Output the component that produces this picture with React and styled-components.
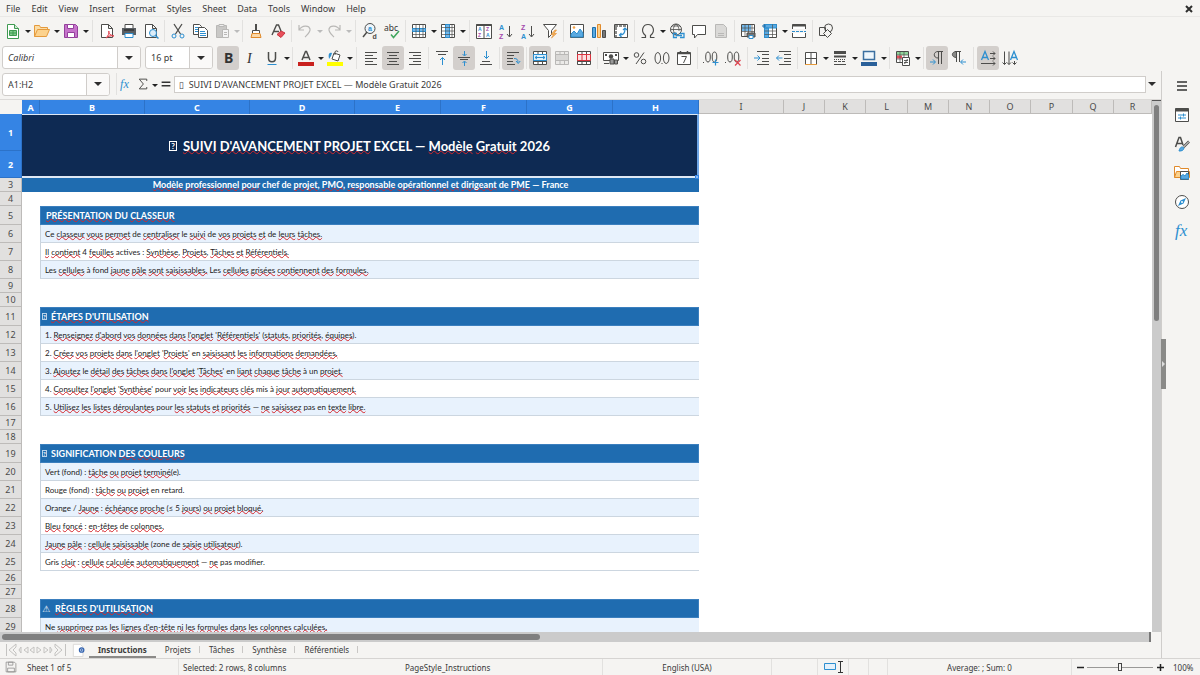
import { Fragment, useState } from "react";
import styled, { createGlobalStyle, css } from "styled-components";

/* ---------- data ---------- */
const MENUS = ["File", "Edit", "View", "Insert", "Format", "Styles", "Sheet", "Data", "Tools", "Window", "Help"];

const COLUMNS = [
  ["A", 18], ["B", 105], ["C", 105], ["D", 105], ["E", 86], ["F", 86], ["G", 86], ["H", 86], ["I", 85],
  ["J", 41], ["K", 41], ["L", 42], ["M", 41], ["N", 41], ["O", 41], ["P", 42], ["Q", 41], ["R", null],
];
const SELECTED_COLS = 8;

// words in [brackets] get the spell checker's wave
const ROWS = [
  { h: 37, kind: "title" },
  { h: 27, kind: "merged" },
  { h: 14, kind: "subtitle", text: "[Modèle] [professionnel] [pour] chef de [projet], [PMO], [responsable] [opérationnel] [et] [dirigeant] de [PME] — France" },
  { h: 14 },
  { h: 19, kind: "section", text: "[PRÉSENTATION] DU [CLASSEUR]" },
  { h: 18, kind: "line", tint: true, text: "Ce [classeur] [vous] [permet] de [centraliser] le [suivi] de [vos] [projets] [et] de [leurs] [tâches.]" },
  { h: 18, kind: "line", text: "[Il] [contient] 4 [feuilles] actives : [Synthèse], [Projets], [Tâches] [et] [Référentiels.]" },
  { h: 18, kind: "line", tint: true, text: "Les [cellules] à fond [jaune] [pâle] [sont] [saisissables.] Les [cellules] [grisées] [contiennent] [des] [formules.]" },
  { h: 14 },
  { h: 14 },
  { h: 19, kind: "section", mark: "box", text: "[ÉTAPES] [D'UTILISATION]" },
  { h: 18, kind: "line", tint: true, text: "1. [Renseignez] [d'abord] [vos] [données] [dans] [l'onglet] '[Référentiels]' ([statuts], [priorités], [équipes])." },
  { h: 18, kind: "line", text: "2. [Créez] [vos] [projets] [dans] [l'onglet] '[Projets]' en [saisissant] [les] [informations] [demandées.]" },
  { h: 18, kind: "line", tint: true, text: "3. [Ajoutez] le [détail] [des] [tâches] [dans] [l'onglet] '[Tâches]' en [liant] [chaque] [tâche] à un [projet.]" },
  { h: 18, kind: "line", text: "4. [Consultez] [l'onglet] '[Synthèse]' pour [voir] [les] [indicateurs] [clés] mis à [jour] [automatiquement.]" },
  { h: 18, kind: "line", tint: true, text: "5. [Utilisez] [les] [listes] [déroulantes] pour [les] [statuts] [et] [priorités] — [ne] [saisissez] pas en [texte] [libre.]" },
  { h: 14 },
  { h: 14 },
  { h: 19, kind: "section", mark: "box", text: "SIGNIFICATION [DES] [COULEURS]" },
  { h: 18, kind: "line", tint: true, text: "Vert (fond) : [tâche] [ou] [projet] [terminé](e)." },
  { h: 18, kind: "line", text: "Rouge (fond) : [tâche] [ou] [projet] en retard." },
  { h: 18, kind: "line", tint: true, text: "Orange / [Jaune] : [échéance] [proche] (≤ 5 [jours]) [ou] [projet] [bloqué.]" },
  { h: 18, kind: "line", text: "[Bleu] [foncé] : [en-têtes] de [colonnes.]" },
  { h: 18, kind: "line", tint: true, text: "[Jaune] [pâle] : [cellule] [saisissable] (zone de [saisie] [utilisateur])." },
  { h: 18, kind: "line", text: "Gris [clair] : [cellule] [calculée] [automatiquement] — [ne] pas modifier." },
  { h: 14 },
  { h: 14 },
  { h: 19, kind: "section", mark: "warn", text: "[RÈGLES] [D'UTILISATION]" },
  { h: 18, kind: "line", tint: true, text: "Ne [supprimez] pas [les] [lignes] [d'en-tête] [ni] [les] [formules] [dans] [les] [colonnes] [calculées.]" },
];

const SHEETS = ["Instructions", "Projets", "Tâches", "Synthèse", "Référentiels"];

// "|" thin separator, "||" wide separator, "v" dropdown arrow
const STANDARD = [
  "new", "v", "open", "v", "save", "v", "||", "pdf", "print", "preview", "|", "cut", "copy", "paste", "v-",
  "|", "brush", "clear", "|", "undo", "v-", "redo", "v-", "||", "find", "spell", "|", "row", "v", "column", "v",
  "||", "sort", "az", "za", "filter", "|", "image", "chart", "pivot", "|", "omega", "v", "link", "comment",
  "header", "|", "printarea", "freeze", "v", "split", "|", "shapes",
];
const FORMATTING = [
  "bold*", "italic", "underline", "v", "|", "fontcolor", "v", "fill", "v", "||", "left", "center*", "right",
  "|", "top", "middle*", "bottom", "|", "wrap*", "|", "merge*", "unmerge", "split2", "|", "currency", "v",
  "percent", "number", "date", "|", "adddec", "deldec", "||", "indent", "outdent", "|", "borders", "v",
  "linestyle", "v", "linecolor", "v", "|", "conditional", "v", "|", "ltr*", "rtl", "||", "horizontal*", "vertical",
];
const SIDEBAR = ["menu", "properties", "styles", "gallery", "navigator", "functions"];

/* ---------- icons (16 x 16) ---------- */
const K = "#4d4d4b";
const B = "#2d8fd0";
const G = "#b9b8b6";
const P = "#a348ad";

const ICONS = {
  new: (
    <>
      <path d="M2.500 1.500h7l4 4v10h-11z" fill="#fff" stroke="#3f9a51" />
      <path d="M9.500 1.500v4h4" fill="#cfead3" stroke="#3f9a51" />
      <path d="M4.500 7.500h7v5h-7zM4.500 10h7M8 7.500v5" fill="#7fce8b" stroke="#3f9a51" />
    </>
  ),
  open: (
    <>
      <path d="M.5 13.500V2.500h5l1 2h7v3" fill="#fbdca4" stroke="#e59a3c" />
      <path d="M.5 13.500l3-7h12l-3 7z" fill="#fcd28d" stroke="#e59a3c" />
    </>
  ),
  save: (
    <>
      <path d="M1.500 1.500h11l2 2v11h-13z" fill="#c673cb" stroke="#94409b" />
      <path d="M4.500 1.500h6v4h-6z" fill="#fff" stroke="#94409b" />
      <path d="M4.500 9.500h7v5h-7z" fill="#fff" stroke="#94409b" />
    </>
  ),
  pdf: (
    <>
      <path d="M2.500 1.500h7l4 4v9h-11zM9.500 1.500v4h4" fill="#fff" stroke={K} />
      <path d="M7 15c2-2 3.500-5 3-7-1 0-.5 4 5 5-3-.5-5.500 0-8 2z" fill="#f7c7cb" stroke="#e0434f" />
    </>
  ),
  print: (
    <>
      <path d="M4 1.500h8v4H4z" fill="#fff" stroke={K} />
      <path d="M1 5h14v7H1z" fill="#5a5f63" />
      <path d="M3 7h10" stroke="#1d1d1d" />
      <path d="M4 10.500h8v4H4z" fill="#fff" stroke={B} />
    </>
  ),
  preview: (
    <>
      <path d="M2.500 1.500h7l4 4v9h-11zM9.500 1.500v4h4" fill="#fff" stroke={K} />
      <circle cx="10" cy="10" r="3.500" fill="#dcedf9" stroke={B} />
      <path d="M12.500 12.500l3 3" stroke={B} strokeWidth="1.500" />
    </>
  ),
  cut: (
    <>
      <path d="M4 1l6.500 10M12 1L5.500 11" stroke={K} strokeWidth="1.300" />
      <circle cx="4" cy="13" r="2" stroke={B} />
      <circle cx="12" cy="13" r="2" stroke={B} />
    </>
  ),
  copy: (
    <>
      <path d="M1.500 1.500h6l2 2v8h-8z" fill="#fff" stroke={K} />
      <path d="M3 4.500h4M3 6.500h4M3 8.500h4" stroke={B} />
      <path d="M6.500 4.500h6l3 3v7h-9z" fill="#fff" stroke={K} />
      <path d="M8 8.500h5M8 10.500h6M8 12.500h6" stroke={B} />
    </>
  ),
  paste: (
    <>
      <path d="M2.500 2.500h10v12h-10z" fill="#c9c8c6" stroke={G} />
      <path d="M5 1.500h5v2H5z" fill="#eee" stroke={G} />
      <path d="M8.500 6.500h6v8h-6zM10 9.500h3M10 11.500h3" fill="#f4f4f4" stroke={G} />
    </>
  ),
  brush: (
    <>
      <path d="M7.500 1v6M8.500 1v6" stroke={K} />
      <path d="M4.500 7.500h7v3h-7z" fill="#fff" stroke={K} />
      <path d="M4 10.500l-1 4h10l-1-4z" fill="#fbd8a8" stroke="#e08a2b" />
    </>
  ),
  clear: (
    <>
      <path d="M2 12L6.500 2h2L11 8M4 8.500h5" stroke={K} strokeWidth="1.400" />
      <path d="M7 11.500l4-3.500 4 2-4 4.500z" fill="#e8505b" stroke="#c8323e" />
    </>
  ),
  undo: <path d="M2 2v5h5M2 7c3-5 10-5 11-1 .6 3-2 5-5 8" stroke={G} strokeWidth="1.200" />,
  redo: <path d="M14 2v5H9M14 7C11 2 4 2 3 6c-.6 3 2 5 5 8" stroke={G} strokeWidth="1.200" />,
  find: (
    <>
      <circle cx="8" cy="5.500" r="5" fill="#eef6fc" stroke={K} />
      <path d="M5 9l-4 5" stroke={K} strokeWidth="1.500" />
      <g fontSize="7" fontWeight="700" fontFamily="Liberation Sans, sans-serif">
        <text x="6" y="8" fill={B}>a</text>
        <text x="10.500" y="16" fill={K}>d</text>
      </g>
    </>
  ),
  spell: (
    <>
      <text x="0" y="8" fontSize="8.500" fill="#333">abc</text>
      <path d="M7 11.500l2.500 3L15 8" stroke="#41a75e" strokeWidth="1.500" />
    </>
  ),
  row: (
    <>
      <path d="M1.500 1.500h13v13h-13z" fill="#fff" stroke={K} />
      <path d="M1.500 5.500h13v3h-13z" fill="#71b7ea" stroke={B} />
      <path d="M1.500 11.500h13M5 1.500v13M8.500 1.500v13M12 1.500v13" stroke={K} strokeWidth=".7" />
    </>
  ),
  column: (
    <>
      <path d="M1.500 1.500h13v13h-13z" fill="#fff" stroke={K} />
      <path d="M5.500 1.500h4v13h-4z" fill="#71b7ea" stroke={B} />
      <path d="M1.500 4.500h13M1.500 8h13M1.500 11.500h13M12 1.500v13" stroke={K} strokeWidth=".7" />
    </>
  ),
  sort: (
    <>
      <path d="M.5 1.500h15v14H.5zM8 2v13" fill="#fff" stroke={K} />
      <path d="M.5 2h15" stroke={K} strokeWidth="2" />
      <g fontSize="5" fontWeight="700" fontFamily="Liberation Sans, sans-serif">
        <text x="2" y="8" fill={B}>A</text><text x="2" y="14" fill={P}>Z</text>
        <text x="10" y="8" fill={P}>Z</text><text x="10" y="14" fill={B}>A</text>
      </g>
    </>
  ),
  az: (
    <>
      <g fontSize="7" fontFamily="Liberation Sans, sans-serif" fontWeight="700">
        <text x="1" y="7" fill={B}>A</text>
        <text x="1" y="16" fill={P}>Z</text>
      </g>
      <path d="M11.500 3v10.500M9 11l2.500 3 2.500-3" stroke={K} />
    </>
  ),
  za: (
    <>
      <g fontSize="7" fontFamily="Liberation Sans, sans-serif" fontWeight="700">
        <text x="1" y="7" fill={P}>Z</text>
        <text x="1" y="16" fill={B}>A</text>
      </g>
      <path d="M11.500 3v10.500M9 11l2.500 3 2.500-3" stroke={K} />
    </>
  ),
  filter: (
    <>
      <path d="M1.500 1.500h13l-5 6v4l-3 3v-7z" fill="#fff" stroke={K} />
      <path d="M13 7l-4 4.500h2.500L9.500 15l5-4.500h-2.500L14.500 7z" fill="#f7b660" stroke="#e08a2b" strokeWidth=".6" />
    </>
  ),
  image: (
    <>
      <path d="M1.500 1.500h13v13h-13z" fill="#fff" stroke={K} />
      <path d="M2 14v-3l3-3 3 3 3-5 3 4v4z" fill="#5ba9e0" stroke={B} />
      <circle cx="5" cy="4.500" r="1.300" fill="#f3a243" />
    </>
  ),
  chart: (
    <>
      <path d="M1.500 4.500h3v10h-3z" fill="#5ba9e0" stroke="#1d6fab" />
      <path d="M6.500 1.500h3v13h-3z" fill="#fbd08c" stroke="#e08a2b" />
      <path d="M11.500 7.500h3v7h-3z" fill="#777" stroke={K} />
    </>
  ),
  pivot: (
    <>
      <path d="M1.500 1.500h13v13h-13z" fill="#fff" stroke={K} />
      <path d="M2 3h12M3 4v10" stroke="#8a8a88" strokeWidth="2" strokeDasharray="3 1" />
      <path d="M7 12c4 0 5-2 5-6M10 7l2-2 2 2M8.500 10L6.500 12l2 2" stroke={B} strokeWidth="1.200" />
    </>
  ),
  omega: <path d="M1.500 14.500h4v-2C0 8 3 1.500 8 1.500S16 8 10.500 12.500v2h4" stroke={K} strokeWidth="1.200" />,
  link: (
    <>
      <circle cx="7" cy="6.500" r="5.500" stroke={K} />
      <path d="M1.500 6.500h11M3 3h8M3 10h4M7 1c-4 4-3 8 0 11M7 1c3 3 3 5 3 7" stroke={K} strokeWidth=".8" />
      <path d="M8 10.500H4.500v4H8M11 10.500h4v4h-4M7 12.500h6" stroke={B} strokeWidth="1.300" />
    </>
  ),
  comment: <path d="M1.500 2.500h13v9h-8l-3 3.500v-3.500h-2z" fill="#fff" stroke={K} />,
  header: (
    <>
      <path d="M2.500 1.500h8l3 3v10h-11z" fill="#dad9d7" stroke={G} />
      <path d="M5 10.500h6M5 12.500h6" stroke={G} />
    </>
  ),
  printarea: (
    <>
      <path d="M1.500 1.500h13v12h-13z" fill="#fff" stroke={K} />
      <path d="M2 2h9v6H2z" fill="#71b7ea" />
      <path d="M1.500 5h13M1.500 8.500h13M5 1.500v12M8.500 1.500v12M12 1.500v12" stroke={K} strokeWidth=".7" />
      <path d="M7 10h8v4H7z" fill="#777" stroke={K} />
      <path d="M9 12.500h4v3H9z" fill="#fff" stroke={B} />
    </>
  ),
  freeze: (
    <>
      <path d="M2.500 1.500h12v13h-12z" fill="#fff" stroke={K} />
      <path d="M2.500 1.500h12v3.500h-12zM2.500 5h4v9.500h-4z" fill="#5ba9e0" stroke={B} />
      <path d="M2.500 8h12M2.500 11.500h12M10.500 1.500v13" stroke={K} strokeWidth=".7" />
      <path d="M0 3h4M2 1v4" stroke="#1d6fab" />
    </>
  ),
  split: (
    <>
      <path d="M1.500 6V1.500h13V6M1.500 10v4.500h13V10" fill="#fff" stroke={K} />
      <path d="M1.500 2.500h13" stroke={K} strokeWidth="2" />
      <path d="M1 8.500h14" stroke={B} strokeDasharray="3 1" />
    </>
  ),
  shapes: (
    <>
      <path d="M1.500 4.500h6v8h-6z" stroke={K} />
      <circle cx="10.500" cy="5" r="4" stroke={K} />
      <path d="M9.500 6.500l4 4-4 4-4-4z" fill="#f5f4f2" stroke={K} />
    </>
  ),
  bold: <text x="4" y="13" fontSize="14" fontWeight="700" fill="#333">B</text>,
  italic: <text x="5" y="13" fontSize="14" fontStyle="italic" fontFamily="Liberation Serif, serif" fill="#333">I</text>,
  underline: (
    <>
      <path d="M4.500 2v6c0 5 7 5 7 0V2" stroke={K} strokeWidth="1.500" />
      <path d="M3.500 14.500h9" stroke={B} />
    </>
  ),
  fontcolor: (
    <>
      <path d="M4 10L7.500 1.500h1L12 10M5.500 7.500h5" stroke={K} strokeWidth="1.500" />
      <path d="M0 12h16v4H0z" fill="#c9211e" />
    </>
  ),
  fill: (
    <>
      <path d="M7 3l6 2-2 6-6-2z" fill="#fff" stroke={K} />
      <path d="M8 5V2c0-1.500 3-1.500 3 0" stroke={K} />
      <path d="M5 3C2 2 1 4 2 9l2-3z" fill={B} />
      <path d="M0 12h16v4H0z" fill="#ffff00" />
    </>
  ),
  left: <path d="M2 2.500h12M2 5.500h8M2 8.500h12M2 11.500h8M2 14.500h12" stroke={K} />,
  center: <path d="M2 2.500h12M4 5.500h8M2 8.500h12M4 11.500h8M2 14.500h12" stroke={K} />,
  right: <path d="M2 2.500h12M6 5.500h8M2 8.500h12M6 11.500h8M2 14.500h12" stroke={K} />,
  top: (
    <>
      <path d="M2 1.500h12M4 4.500h8" stroke={K} />
      <path d="M8.500 15V7.500M6 10l2.500-2.500L11 10" stroke={B} />
    </>
  ),
  middle: (
    <>
      <path d="M2 7.500h12M4 9.500h8" stroke={K} />
      <path d="M8.500 1v4.500M6.500 4l2 2 2-2M8.500 16v-4.500M6.500 13l2-2 2 2" stroke={B} />
    </>
  ),
  bottom: (
    <>
      <path d="M4 11.500h8M2 14.500h12" stroke={K} />
      <path d="M8.500 1v7.500M6 6l2.500 2.500L11 6" stroke={B} />
    </>
  ),
  wrap: (
    <>
      <path d="M2 2.500h12M2 5.500h7M2 8.500h6M2 11.500h6M2 14.500h8" stroke={K} />
      <path d="M9 8.500c3 0 4 1 4 4M11 11l2.200 2.500 2-2.500" stroke={B} />
    </>
  ),
  merge: (
    <>
      <path d="M1.500 1.500h13v13h-13z" fill="#fff" stroke={K} />
      <path d="M6 1.500v13M10.500 1.500v13M1.500 11.500h13" stroke={K} />
      <path d="M1.500 4.500h13v6h-13z" fill="#dff0fb" stroke={B} />
      <path d="M3 7.500h10M5 6L3 7.500 5 9M11 6l2 1.500L11 9" stroke={B} />
    </>
  ),
  unmerge: (
    <>
      <path d="M1.500 1.500h13v13h-13z" fill="#ebeae8" stroke={G} />
      <path d="M1.500 4.500h13v6h-13z" fill="#d8d7d5" stroke={G} />
      <path d="M6 1.500v3M10.500 1.500v3M6 10.500v4M10.500 10.500v4" stroke={G} />
    </>
  ),
  split2: (
    <>
      <path d="M1.500 1.500h13v13h-13z" fill="#fff" stroke={K} />
      <path d="M6 1.500v13M10.500 1.500v13M1.500 11.500h13" stroke={K} />
      <path d="M1.500 4.500h13v6h-13zM6 4.500v6M10.500 4.500v6" fill="#fbdfe0" stroke="#d9343f" />
    </>
  ),
  currency: (
    <>
      <path d="M.5 2.500h15v8H.5z" fill="#fff" stroke={K} />
      <path d="M2 4h2v2H2zM12 4h2v2h-2z" fill={K} />
      <circle cx="8" cy="6.500" r="2.200" fill={K} />
      <path d="M7 9h4v5H7zM11.500 10h3v4h-3z" fill="#999" stroke={K} />
      <path d="M1 13.500h5" stroke={K} />
    </>
  ),
  percent: (
    <>
      <circle cx="4.500" cy="5" r="2.300" stroke={K} />
      <circle cx="11.500" cy="11.500" r="2.300" stroke={K} />
      <path d="M12 2.500L4 14" stroke={K} />
    </>
  ),
  number: (
    <>
      <ellipse cx="3.800" cy="8" rx="2.800" ry="5.500" stroke={K} />
      <ellipse cx="12.200" cy="8" rx="2.800" ry="5.500" stroke={K} />
      <path d="M7.500 13.500h1" stroke={K} />
    </>
  ),
  date: (
    <>
      <path d="M1.500 2.500h13v12h-13z" fill="#fff" stroke={K} />
      <path d="M1.500 3.500h13M4.500 1v3M11.500 1v3" stroke={K} strokeWidth="1.500" />
      <path d="M5.500 6.500h5l-3 6.500" stroke={K} />
    </>
  ),
  adddec: (
    <>
      <path d="M0 12.500h1" stroke={K} />
      <ellipse cx="5" cy="7" rx="2.300" ry="5" stroke={K} />
      <ellipse cx="11.500" cy="7" rx="2.300" ry="5" stroke={K} />
      <path d="M12.500 9.500v6M9.500 12.500h6" stroke={B} strokeWidth="1.200" />
    </>
  ),
  deldec: (
    <>
      <path d="M0 12.500h1" stroke={K} />
      <ellipse cx="5" cy="7" rx="2.300" ry="5" stroke={K} />
      <ellipse cx="11.500" cy="7" rx="2.300" ry="5" stroke={K} />
      <path d="M10 10l5.500 5.500M15.500 10L10 15.500" stroke="#e0434f" strokeWidth="1.200" />
    </>
  ),
  indent: (
    <>
      <path d="M3 1.500h12M8 4.500h7M8 8.500h7M8 11.500h7M3 14.500h12" stroke={K} />
      <path d="M0 8h6M3.500 5.500L6 8l-2.500 2.500" stroke={B} />
    </>
  ),
  outdent: (
    <>
      <path d="M3 1.500h12M8 4.500h7M8 8.500h7M8 11.500h7M3 14.500h12" stroke={K} />
      <path d="M6.500 8h-6M3 5.500L.5 8 3 10.500" stroke={B} />
    </>
  ),
  borders: (
    <>
      <path d="M2.500 14V2.500h11V14M8 2.500V14M2.500 8.500h11" fill="#fff" stroke={K} />
      <path d="M2 14.500h12" stroke="#e59a3c" />
    </>
  ),
  linestyle: (
    <>
      <path d="M2 2.500h12" stroke={K} strokeWidth="3" />
      <path d="M2 6.500h12" stroke={K} strokeWidth="2" />
      <path d="M2 9.500h12" stroke={K} strokeDasharray="1 1" />
      <path d="M2 11.500h12" stroke={K} strokeDasharray="3 1" />
      <path d="M2 14.500h12" stroke={K} />
    </>
  ),
  linecolor: (
    <>
      <path d="M2.500 1.500h11v8h-11z" fill="#eef6fc" stroke="#3b6fa0" strokeWidth="1.500" />
      <path d="M0 12h16v4H0z" fill="#2a6099" />
    </>
  ),
  conditional: (
    <>
      <path d="M1.500 1.500h12v11h-12z" fill="#fff" stroke={K} />
      <path d="M2 2h11v3H2z" fill="#8fd39a" />
      <path d="M2 5.500h5v3H2z" fill="#e8505b" />
      <path d="M1.500 5h12M1.500 9h12M5 1.500v11M9 1.500v11" stroke={K} strokeWidth=".7" />
      <path d="M7.500 7.500h7v8h-7z" fill="#fff" stroke={K} />
      <path d="M9 10.500h4M9 12.500h4M12.500 9l-3 5" stroke={K} strokeWidth=".9" />
    </>
  ),
  ltr: (
    <>
      <path d="M9 8C4 8 4 1.500 9 1.500h5M9.500 1.500V14M12.500 1.500V14" stroke={K} />
      <path d="M1 12h5M4 9.500L6.500 12 4 14.500" stroke={B} />
    </>
  ),
  rtl: (
    <>
      <path d="M5.500 7.500C0 7.500 0 1.500 5.500 1.500z" fill="#8a8a88" stroke={K} />
      <path d="M4 1.500h6M5.500 1.500V12M8.500 1.500V12" stroke={K} />
      <path d="M15 12h-5M12 9.500L9.500 12l2.500 2.500" stroke={B} />
    </>
  ),
  horizontal: (
    <>
      <path d="M1.500 10L5 1.500 8.500 10M2.500 7.500h5" stroke={B} strokeWidth="1.300" />
      <path d="M10 3.500h5M13 1.500l2 2-2 2M10 8.500h5M13 6.500l2 2-2 2M1 13.500h14M13 11.500l2 2-2 2" stroke={K} />
    </>
  ),
  vertical: (
    <>
      <path d="M8.500 10L12 1.500l3.500 8.500M9.500 7.500h5" stroke={B} strokeWidth="1.300" />
      <path d="M2.500 1.500v13M.5 12.500l2 2 2-2M7 1.500v13M5 12.500l2 2 2-2M12.500 11v3.500M10.500 12.500l2 2 2-2" stroke={K} />
    </>
  ),
  fx: (
    <text x="0" y="12" fontSize="14" fontStyle="italic" fontFamily="Liberation Serif, serif" fill={B}>fx</text>
  ),
  sigma: <path d="M13 4V1.500H3L8.500 8 3 14.500h10V12" stroke={K} strokeWidth="1.300" />,
  equals: <path d="M3 6h10M3 10h10" stroke="#333" strokeWidth="1.500" />,
  menu: <path d="M3 4h10M3 8h10M3 12h10" stroke="#333" strokeWidth="1.500" />,
  properties: (
    <>
      <path d="M1.500 1.500h13v13h-13z" fill="#fff" stroke={K} />
      <path d="M1.500 3h13" stroke={K} strokeWidth="3" />
      <path d="M4 8h8M4 11h8M9.500 6.500v3M6.500 9.500v3" stroke={B} />
    </>
  ),
  styles: (
    <>
      <path d="M1.500 11L5 1.500h1.500L9 9M3 7.500h5" stroke={K} strokeWidth="1.500" />
      <path d="M15 5.500L9.500 11" stroke={K} strokeWidth="2.500" />
      <path d="M15 5.500L9.500 11" stroke="#fff" strokeWidth="1" />
      <path d="M5 15c1-4 3-5 5-3-.5 2.500-2 3-5 3z" fill="#5ba9e0" stroke={B} />
    </>
  ),
  gallery: (
    <>
      <path d="M.5 12.500v-11h5l1 2h8v3" fill="#fff" stroke="#e08a2b" />
      <path d="M.5 12.500l2-6h13v6z" fill="#fcd28d" stroke="#e08a2b" />
      <path d="M6.500 6.500h8v8h-8z" fill="#fff" stroke={K} />
      <path d="M7 14v-3l2-1.500 2 1.500 2-3 1.500 2v4z" fill="#5ba9e0" stroke={B} />
    </>
  ),
  navigator: (
    <>
      <circle cx="8" cy="8" r="6.500" fill="#fff" stroke={K} />
      <path d="M12 4l-2.500 5.500L4 12l2.500-5.500z" fill={B} />
      <circle cx="8" cy="8" r="1" fill="#fff" />
    </>
  ),
  functions: (
    <text x="1" y="13" fontSize="17" fontStyle="italic" fontFamily="Liberation Serif, serif" fill={B}>fx</text>
  ),
  savedoc: (
    <>
      <path d="M1.500 1.500h11l2 2v11h-13z" stroke="#8a8a88" />
      <path d="M4.500 1.500h6v4h-6zM3.500 9.500h9v5h-9z" stroke="#8a8a88" />
    </>
  ),
  addsheet: (
    <>
      <path d="M1.500 1.500h8l3 3v11h-11z" fill="#fff" stroke="#d8d7d5" />
      <circle cx="11" cy="8" r="2.500" fill="#fff" stroke="#3565b0" strokeWidth="1.500" />
      <path d="M9.500 8h3M11 6.500v3" stroke="#3565b0" />
    </>
  ),
};

function Icon({ name, size = 16 }) {
  return (
    <Glyph width={size} height={size} viewBox="0 0 16 16" aria-hidden="true">
      {ICONS[name]}
    </Glyph>
  );
}

function Tools({ items }) {
  return items.map((item, i) => {
    if (item[0] === "|") return <Divider key={i} $wide={item === "||"} />;
    if (item === "v" || item === "v-") {
      return <ArrowButton key={i} aria-label={`${items[i - 1]} options`} disabled={item === "v-"} />;
    }
    const name = item.replace("*", "");
    return (
      <ToolButton key={i} $pressed={item.endsWith("*")} aria-label={name}>
        <Icon name={name} />
      </ToolButton>
    );
  });
}

function Spelled({ text }) {
  return text
    .split(/(\[[^\]]+\])/)
    .map((part, i) => (part[0] === "[" ? <Wave key={i}>{part.slice(1, -1)}</Wave> : <Fragment key={i}>{part}</Fragment>));
}

function RowCells({ row }) {
  switch (row.kind) {
    case "title":
      return (
        <TitleCell colSpan={8} rowSpan={2}>
          <Tofu $large>?</Tofu>
          <Spelled text="[SUIVI] [D'AVANCEMENT] [PROJET] EXCEL — [Modèle] [Gratuit] 2026" />
          <FillHandle />
        </TitleCell>
      );
    case "merged":
      return null;
    case "subtitle":
      return <SubtitleCell colSpan={8}><Spelled text={row.text} /></SubtitleCell>;
    case "section":
      return (
        <>
          <Cell />
          <SectionCell colSpan={7} $flush={!!row.mark}>
            {row.mark === "box" && <Tofu>?</Tofu>}
            {row.mark === "warn" && <Warn>⚠</Warn>}
            <Spelled text={row.text} />
          </SectionCell>
        </>
      );
    case "line":
      return (
        <>
          <Cell />
          <LineCell colSpan={7} $tint={row.tint}><Spelled text={row.text} /></LineCell>
        </>
      );
    default:
      return <Cell colSpan={8} />;
  }
}

export default function App() {
  const [sheet, setSheet] = useState(0);
  const [zoom, setZoom] = useState(100);

  return (
    <>
      <GlobalStyle />
      <Window>
        <MenuBar>
          {MENUS.map((m) => <MenuItem key={m}>{m}</MenuItem>)}
          <CloseButton aria-label="Close document">
            <svg width="8" height="8" viewBox="0 0 8 8"><path d="M1 1l6 6M7 1L1 7" stroke="#2e2e2e" strokeWidth="2" /></svg>
          </CloseButton>
        </MenuBar>

        <Toolbar><Tools items={STANDARD} /></Toolbar>

        <Toolbar>
          <Combo $width={139} $italic>
            <input aria-label="Font name" defaultValue="Calibri" />
            <button aria-label="Font list"><Caret /></button>
          </Combo>
          <Combo $width={68}>
            <input aria-label="Font size" defaultValue="16 pt" />
            <button aria-label="Size list"><Caret /></button>
          </Combo>
          <Tools items={FORMATTING} />
        </Toolbar>

        <Body>
          <Main>
            <FormulaBar>
              <Combo $width={108}>
                <input aria-label="Name box" defaultValue="A1:H2" />
                <button aria-label="Named ranges"><Caret /></button>
              </Combo>
              <Divider />
              <SmallButton aria-label="Function wizard"><Icon name="fx" size={14} /></SmallButton>
              <SmallButton aria-label="Select function"><Icon name="sigma" size={12} /></SmallButton>
              <ArrowButton aria-label="Sum options" />
              <SmallButton aria-label="Formula"><Icon name="equals" size={14} /></SmallButton>
              <FormulaInput
                aria-label="Input line"
                defaultValue={"▯  SUIVI D'AVANCEMENT PROJET EXCEL — Modèle Gratuit 2026"}
              />
              <ExpandButton aria-label="Expand formula bar"><Caret /></ExpandButton>
            </FormulaBar>

            <SheetArea>
              <Scroller>
                <Grid>
                  <colgroup>
                    <Col $width={22} />
                    {COLUMNS.map(([name, w]) => <Col key={name} $width={w} />)}
                  </colgroup>
                  <thead>
                    <tr>
                      <Corner />
                      {COLUMNS.map(([name], i) => (
                        <ColHead key={name} $on={i < SELECTED_COLS}>{name}</ColHead>
                      ))}
                    </tr>
                  </thead>
                  <tbody>
                    {ROWS.map((row, i) => (
                      <Row key={i} $height={row.h}>
                        <RowHead $on={i < 2}>{i + 1}</RowHead>
                        <RowCells row={row} />
                        <Cell colSpan={10} />
                      </Row>
                    ))}
                  </tbody>
                </Grid>
              </Scroller>
              <VScroll><VThumb /></VScroll>
            </SheetArea>

            <HScroll><HThumb /></HScroll>

            <TabBar>
              <TabNav>
                <svg width="62" height="14" viewBox="0 0 62 14" fill="none" stroke="#c4c3c1">
                  <path d="M1.500 1v12M11 1L4 7l7 6v-3L8 7l3-3zM16 4l-2 3 2 3zM23 4l-4 3 4 3zM29 4l-4 3 4 3z" />
                  <path d="M32 4l4 3-4 3zM39 4l4 3-4 3zM45 4l2 3-2 3zM50 1l7 6-7 6v-3l3-3-3-3zM60.500 1v12" />
                </svg>
              </TabNav>
              <AddSheet aria-label="Add sheet"><Icon name="addsheet" size={14} /></AddSheet>
              {SHEETS.map((name, i) => (
                <Tab key={name} $active={i === sheet} onClick={() => setSheet(i)}>{name}</Tab>
              ))}
            </TabBar>
          </Main>

          <Sidebar>
            <Splitter aria-label="Hide sidebar">
              <svg width="3" height="6" viewBox="0 0 3 6"><path d="M0 0l3 3-3 3z" fill="#ddd" /></svg>
            </Splitter>
            {SIDEBAR.map((name) => (
              <SideButton key={name} aria-label={name}><Icon name={name} /></SideButton>
            ))}
          </Sidebar>
        </Body>

        <StatusBar>
          <Status><Icon name="savedoc" size={12} /></Status>
          <Status>Sheet 1 of 5</Status>
          <Status $line>Selected: 2 rows, 8 columns</Status>
          <Status>PageStyle_Instructions</Status>
          <Status $line $center>English (USA)</Status>
          <Status $line />
          <Status $line $center>
            <svg width="19" height="12" viewBox="0 0 19 12" fill="none">
              <path d="M.5 2.500h11v6H.5z" fill="#e4f1fb" stroke={B} />
              <path d="M14 .5h5M16.500 .5v11M14 11.500h5" stroke="#333" />
            </svg>
          </Status>
          <Status $line />
          <Status $line />
          <Status $line $center>Average: ; Sum: 0</Status>
          <Status $line>
            <ZoomButton aria-label="Zoom out" onClick={() => setZoom((z) => Math.max(20, z - 5))}>
              <svg width="7" height="7" viewBox="0 0 7 7"><path d="M0 3.500h7" stroke="#222" strokeWidth="1.500" /></svg>
            </ZoomButton>
            <ZoomSlider aria-label="Zoom" min="20" max="180" value={zoom} onChange={(e) => setZoom(+e.target.value)} />
            <ZoomButton aria-label="Zoom in" onClick={() => setZoom((z) => Math.min(180, z + 5))}>
              <svg width="7" height="7" viewBox="0 0 7 7"><path d="M0 3.500h7M3.500 0v7" stroke="#222" strokeWidth="1.500" /></svg>
            </ZoomButton>
          </Status>
          <Status>{zoom}%</Status>
        </StatusBar>
      </Window>
    </>
  );
}

/* ---------- styles ---------- */
const GlobalStyle = createGlobalStyle`
  * { box-sizing: border-box; }
  body {
    margin: 0;
    overflow: hidden;
    background: #f5f4f2;
    color: #3a3a3a;
    font-family: "Noto Sans", sans-serif;
    font-size: 9px;
  }
  button, input { font: inherit; color: inherit; }
  button { padding: 0; border: 0; background: none; cursor: default; }
`;

const Glyph = styled.svg`
  display: block;
  flex: none;
  fill: none;
  overflow: visible;
  text { stroke: none; }
`;

const Window = styled.div`
  display: flex;
  flex-direction: column;
  height: 100vh;
`;

/* ===== Menu & toolbars ===== */
const MenuBar = styled.nav`
  display: flex;
  align-items: center;
  gap: 11px;
  height: 17px;
  padding: 1px 7px 0 6px;
  border-bottom: 1px solid #e9e8e6;
`;

const MenuItem = styled.button`
  line-height: 15px;
`;

const CloseButton = styled.button`
  display: grid;
  place-items: center;
  margin-left: auto;
`;

const Toolbar = styled.div`
  display: flex;
  align-items: center;
  height: 27px;
  padding-left: 2px;
`;

const ToolButton = styled.button`
  display: grid;
  place-items: center;
  flex: none;
  width: 22px;
  height: 24px;
  border-radius: 3px;
  background: ${(p) => (p.$pressed ? "#d3cfcc" : "transparent")};
`;

const SmallButton = styled(ToolButton)`
  width: 16px;
`;

const ArrowButton = styled.button`
  flex: none;
  width: 7px;
  height: 24px;
  &::before {
    content: "";
    display: block;
    margin: 2px auto 0;
    width: 0;
    border: 3px solid transparent;
    border-top: 3px solid #222;
    border-bottom: 0;
  }
  &:disabled::before { border-top-color: #bbb; }
`;

const Divider = styled.span`
  flex: none;
  width: 1px;
  height: 22px;
  margin: 0 ${(p) => (p.$wide ? 3 : 2)}px;
  background: #e2e1df;
`;

const Caret = styled.span`
  display: block;
  width: 0;
  border: 4px solid transparent;
  border-top-color: #2e2e2e;
  border-bottom: 0;
`;

const Combo = styled.div`
  display: flex;
  flex: none;
  width: ${(p) => p.$width}px;
  height: 23px;
  margin-right: 4px;
  border: 1px solid #d0cdca;
  border-radius: 3px;
  background: #fff;
  overflow: hidden;
  input {
    flex: 1;
    min-width: 0;
    padding: 0 5px;
    border: 0;
    outline: 0;
    background: none;
    font-style: ${(p) => (p.$italic ? "italic" : "normal")};
  }
  button {
    display: grid;
    place-items: center;
    width: 23px;
    border-left: 1px solid #d0cdca;
    background: #faf9f8;
  }
`;

const Body = styled.div`
  display: flex;
  flex: 1;
  min-height: 0;
`;

const Main = styled.main`
  display: flex;
  flex-direction: column;
  flex: 1;
  min-width: 0;
`;

const FormulaBar = styled.div`
  display: flex;
  align-items: center;
  height: 29px;
  padding: 0 4px 2px 2px;
  border-bottom: 1px solid #dcdad8;
`;

const FormulaInput = styled.input`
  flex: 1;
  min-width: 0;
  height: 17px;
  padding: 0 4px;
  border: 1px solid #d0cdca;
  outline: 0;
  background: #fff;
`;

const ExpandButton = styled.button`
  display: grid;
  place-items: center;
  width: 11px;
`;

/* ===== Sheet ===== */
const SheetArea = styled.div`
  display: flex;
  flex: 1;
  min-height: 0;
`;

const Scroller = styled.div`
  flex: 1;
  min-width: 0;
  overflow: hidden;
  background: #fff;
`;

const Grid = styled.table`
  width: 100%;
  table-layout: fixed;
  border-collapse: separate;
  border-spacing: 0;
  th, td {
    padding: 0;
    white-space: nowrap;
  }
`;

const Col = styled.col`
  width: ${(p) => (p.$width ? `${p.$width}px` : "auto")};
`;

const headColors = css`
  background: ${(p) => (p.$on ? "#3584e4" : "#e1e0df")};
  color: ${(p) => (p.$on ? "#fff" : "#4a4a4a")};
  font-weight: ${(p) => (p.$on ? 700 : 400)};
  border: 0 solid ${(p) => (p.$on ? "#2c72c8" : "#bdbbb9")};
`;

const Corner = styled.td`
  background: #f5f4f2;
`;

const ColHead = styled.th`
  ${headColors}
  height: 14px;
  line-height: 13px;
  border-right-width: 1px;
  border-bottom-width: ${(p) => (p.$on ? 0 : 1)}px;
`;

const RowHead = styled.th`
  ${headColors}
  line-height: 13px;
  border-right-width: 1px;
  border-bottom-width: 1px;
`;

const Row = styled.tr`
  height: ${(p) => p.$height}px;
`;

const Cell = styled.td``;

const TextCell = styled.td`
  font-family: Lato, sans-serif;
  line-height: 12px;
`;

const TitleCell = styled(TextCell)`
  position: relative;
  background: #0e2a53;
  border-top: 1px solid #dfe9f5;
  border-bottom: 2px solid #dfe9f5;
  border-right: 2px solid #6ea6e6;
  color: #fff;
  font-size: 13px;
  font-weight: 700;
  text-align: center;
`;

const SubtitleCell = styled(TextCell)`
  background: #1f6cb0;
  color: #fff;
  font-weight: 700;
  text-align: center;
`;

const SectionCell = styled(TextCell)`
  && { padding-left: ${(p) => (p.$flush ? 1 : 5)}px; }
  background: #1f6cb0;
  border: 1px solid #3b7fbe;
  color: #fff;
  font-weight: 700;
`;

const LineCell = styled(TextCell)`
  && { padding-left: 4px; }
  background: ${(p) => (p.$tint ? "#e8f2fd" : "#fff")};
  border-left: 1px solid #c9d3dd;
  border-bottom: 1px solid #ccd6e0;
  color: #1c1c1c;
  font-size: 8px;
`;

const Wave = styled.span`
  text-decoration: underline wavy #d5262b 1px;
  text-decoration-skip-ink: none;
  text-underline-offset: -1px;
`;

const Tofu = styled.span`
  display: inline-block;
  overflow: hidden;
  width: ${(p) => (p.$large ? 8 : 5)}px;
  height: ${(p) => (p.$large ? 10 : 7)}px;
  margin-right: ${(p) => (p.$large ? 6 : 4)}px;
  border: 1px solid ${(p) => (p.$large ? "#fff" : "#b9d2ea")};
  font-size: ${(p) => (p.$large ? 8 : 6)}px;
  line-height: ${(p) => (p.$large ? 8 : 5)}px;
  text-align: center;
`;

const Warn = styled.span`
  margin-right: 5px;
  font-family: "DejaVu Sans", sans-serif;
  font-weight: 400;
`;

const FillHandle = styled.span`
  position: absolute;
  right: -2px;
  bottom: -3px;
  width: 4px;
  height: 4px;
  border: 1px solid #3584e4;
  background: #8fbcf0;
`;

const VScroll = styled.div`
  width: 9px;
  padding: 4px 2px 0;
  border-top: 1px solid #555;
  background: #cbcbcb;
`;

const VThumb = styled.div`
  height: 41%;
  border-radius: 3px;
  background: #7f7f7f;
`;

const HScroll = styled.div`
  height: 10px;
  margin-right: 10px;
  padding: 2px;
  border-right: 2px solid #777;
  background: #cbcbcb;
`;

const HThumb = styled.div`
  width: 47%;
  height: 6px;
  border-radius: 3px;
  background: #7f7f7f;
`;

/* ===== Tabs ===== */
const TabBar = styled.div`
  display: flex;
  align-items: center;
  height: 16px;
  padding-left: 5px;
`;

const TabNav = styled.span`
  display: flex;
  margin-right: 2px;
`;

const AddSheet = styled.button`
  padding: 0 3px;
`;

const Tab = styled.button`
  position: relative;
  height: 16px;
  padding: 0 9px 2px;
  font-size: 8px;
  font-weight: ${(p) => (p.$active ? 700 : 400)};
  box-shadow: ${(p) => (p.$active ? "inset 0 -2px #8b8a88" : "none")};
  &:not(:nth-child(3))::after {
    content: "";
    position: absolute;
    right: 0;
    top: 4px;
    width: 1px;
    height: 7px;
    background: #c9c7c5;
  }
`;

/* ===== Sidebar ===== */
const Sidebar = styled.aside`
  position: relative;
  width: 39px;
  padding-left: 1px;
  border-left: 1px solid #cfcdcb;
`;

const SideButton = styled.button`
  display: grid;
  place-items: center;
  width: 100%;
  height: 29px;
`;

const Splitter = styled.button`
  position: absolute;
  left: -1px;
  top: 268px;
  display: grid;
  place-items: center;
  width: 5px;
  height: 50px;
  background: #8a8a88;
`;

/* ===== Status bar ===== */
const StatusBar = styled.footer`
  display: grid;
  grid-template-columns: 22px 156fr 222fr 202fr 169fr 46px 31px 20px 19px 184fr 97px 32px;
  height: 17px;
  border-top: 1px solid #d6d4d2;
  font-size: 8px;
`;

const Status = styled.div`
  display: flex;
  align-items: center;
  justify-content: ${(p) => (p.$center ? "center" : "flex-start")};
  gap: 3px;
  min-width: 0;
  padding: 0 4px;
  border-left: 1px solid ${(p) => (p.$line ? "#e2e1df" : "transparent")};
  white-space: nowrap;
`;

const ZoomButton = styled.button`
  display: grid;
  place-items: center;
  width: 8px;
`;

const ZoomSlider = styled.input.attrs({ type: "range" })`
  appearance: none;
  flex: 1;
  min-width: 0;
  height: 10px;
  margin: 0;
  background: linear-gradient(#9a9997, #9a9997) center / 100% 1px no-repeat;
  &::-webkit-slider-thumb {
    appearance: none;
    width: 4px;
    height: 8px;
    border: 1px solid #444;
    background: #f5f4f2;
  }
`;
